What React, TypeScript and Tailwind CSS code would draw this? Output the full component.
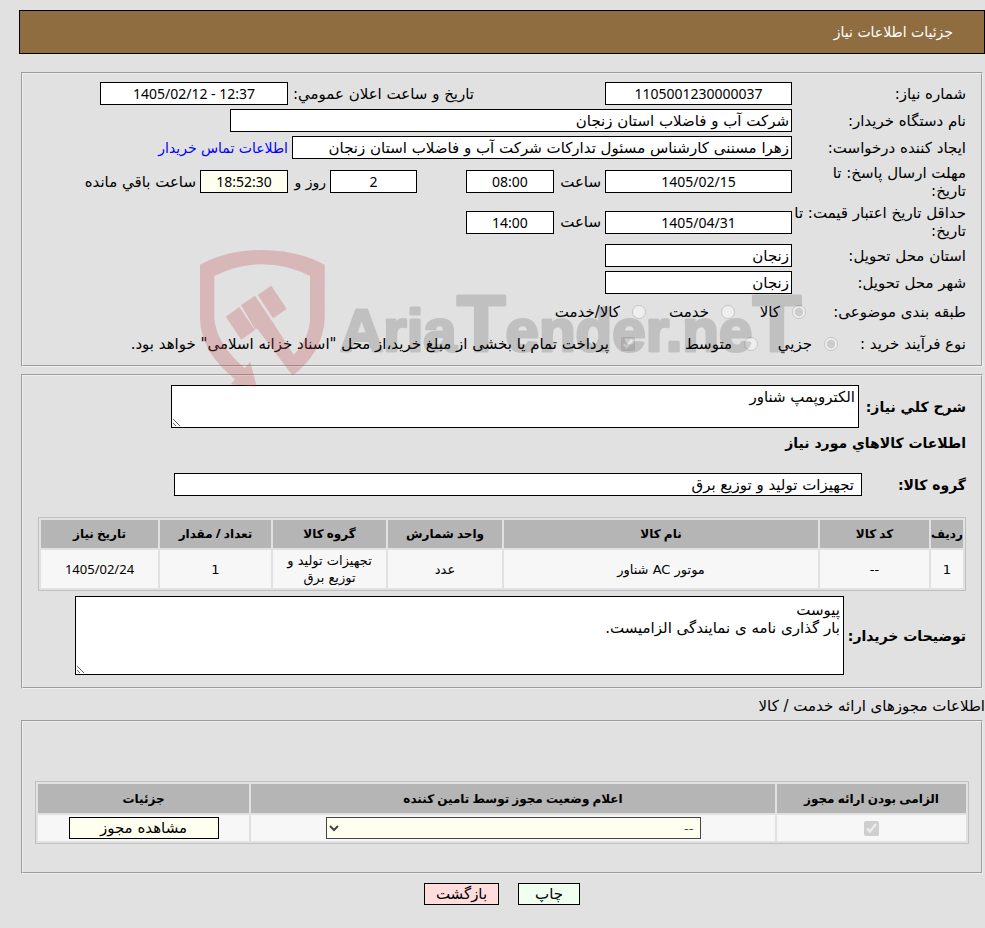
import React from 'react';
import clsx from 'clsx';

const fieldset = 'ml-[21px] mr-[2px] min-w-0 [border:2px_groove_#f0f0f0]';
const box = 'h-[23px] shrink-0 border border-black px-[2px] outline-none';
const num = "text-center text-[14px] font-['Noto_Sans','DejaVu_Sans',sans-serif]";
const th = "bg-[#b5b5b5] p-0 text-[12px] font-bold font-['Noto_Sans','DejaVu_Sans',sans-serif]";
const td = 'bg-[#f7f7f7] p-0 text-center';
const table = 'w-full table-fixed border-separate border-spacing-[2px] border border-[#c0c0c0]';

const goods = [
  { row: '1', code: '--', name: 'موتور AC شناور', unit: 'عدد', group: 'تجهیزات تولید و توزیع برق', count: '1', date: '1405/02/24' },
];

export default function App() {
  return (
    <div
      dir="rtl"
      className="min-h-screen bg-[#e1e1e1] pt-[10px] pb-[23px] font-['DejaVu_Sans',sans-serif] text-[15px] leading-[18px] text-black"
    >
      <header className="ml-[19px] flex h-[44px] items-center border border-black bg-[#8f6d40] px-[31px] text-[14px] text-white">
        <h1>جزئیات اطلاعات نیاز</h1>
      </header>

      {/* Need details */}
      <div className="relative mt-[18px]">
        <fieldset className={clsx(fieldset, 'pt-[6px] pr-[15px] pb-[5px]')}>
          <Row label="شماره نیاز:" id="need-no">
            <Box id="need-no" value="1105001230000037" className={clsx(num, 'w-[187px]')} />
            <label htmlFor="announced" className="mr-[127px] w-[182px] shrink-0 whitespace-nowrap">تاریخ و ساعت اعلان عمومي:</label>
            <Box id="announced" dir="ltr" value="1405/02/12 - 12:37" className={clsx(num, 'w-[188px]')} />
          </Row>
          <Row label="نام دستگاه خریدار:" id="buyer">
            <Box id="buyer" value="شرکت آب و فاضلاب استان زنجان" className="w-[562px]" />
          </Row>
          <Row label="ایجاد کننده درخواست:" id="creator">
            <Box id="creator" value="زهرا مسننی کارشناس مسئول تدارکات شرکت آب و فاضلاب استان زنجان" className="w-[500px]" />
            <a href="#contact" className="whitespace-nowrap text-[14px] text-[#0000ff]">اطلاعات تماس خریدار</a>
          </Row>
          <Row label={'مهلت ارسال پاسخ: تا\nتاریخ:'} id="deadline" className="h-[41px]">
            <Box id="deadline" value="1405/02/15" className={clsx(num, 'w-[187px]')} />
            <label htmlFor="deadline-hour" className="w-[43px] shrink-0 whitespace-nowrap">ساعت</label>
            <Box id="deadline-hour" value="08:00" className={clsx(num, 'w-[88px]')} />
            <Box id="days" value="2" className={clsx(num, 'mr-[45px] w-[87px]')} />
            <label htmlFor="days" className="w-[34px] shrink-0 whitespace-nowrap text-[14px]">روز و</label>
            <Box id="remaining" value="18:52:30" color="bg-[#fffff0]" className={clsx(num, 'w-[88px]')} />
            <label htmlFor="remaining" className="whitespace-nowrap">ساعت باقي مانده</label>
          </Row>
          <Row label={'حداقل تاریخ اعتبار قیمت: تا\nتاریخ:'} id="validity" className="h-[40px]">
            <Box id="validity" value="1405/04/31" className={clsx(num, 'w-[187px]')} />
            <label htmlFor="validity-hour" className="w-[43px] shrink-0 whitespace-nowrap">ساعت</label>
            <Box id="validity-hour" value="14:00" className={clsx(num, 'w-[88px]')} />
          </Row>
          <Row label="استان محل تحویل:" id="province">
            <Box id="province" value="زنجان" className="w-[187px]" />
          </Row>
          <Row label="شهر محل تحویل:" id="city">
            <Box id="city" value="زنجان" className="w-[187px]" />
          </Row>

          <div className="flex h-[32px] items-center">
            <span className="w-[160px] shrink-0 whitespace-nowrap">طبقه بندی موضوعی:</span>
            <Option type="radio" name="subject" label="کالا" checked className="w-[71px]" />
            <Option type="radio" name="subject" label="خدمت" className="w-[89px]" />
            <Option type="radio" name="subject" label="کالا/خدمت" />
          </div>
          <div className="flex h-[32px] items-center">
            <span className="w-[128px] shrink-0 whitespace-nowrap">نوع فرآیند خرید :</span>
            <Option type="radio" name="process" label="جزیي" checked className="w-[80px]" />
            <Option type="radio" name="process" label="متوسط" className="w-[123px]" />
            <Option
              type="checkbox"
              name="treasury"
              label={'پرداخت تمام یا بخشی از مبلغ خرید،از محل "اسناد خزانه اسلامی" خواهد بود.'}
              checked
            />
          </div>
        </fieldset>
        <Watermark />
      </div>

      {/* Goods */}
      <fieldset className={clsx(fieldset, 'mt-[7px] pt-[9px] pr-[15px] pb-[12px] pl-[15px]')}>
        <div className="flex items-center">
          <label htmlFor="summary" className="w-[107px] shrink-0 whitespace-nowrap text-[14px] font-bold">شرح کلي نیاز:</label>
          <textarea id="summary" readOnly defaultValue="الکتروپمپ شناور" className="ml-[133px] block h-[43px] min-w-0 flex-1 border border-black bg-white px-[3px] py-[2px] outline-none" />
        </div>
        <h2 className="mt-[6px] text-[14px] leading-[18px] font-bold">اطلاعات کالاهاي مورد نیاز</h2>
        <div className="mt-[21px] flex items-center">
          <label htmlFor="group" className="w-[104px] shrink-0 text-[14px] font-bold">گروه کالا:</label>
          <input id="group" readOnly value="تجهیزات تولید و توزیع برق" className="ml-[136px] h-[23px] min-w-0 flex-1 border border-black bg-white px-[7px] outline-none" />
        </div>
        <table className={clsx(table, 'mt-[21px]')}>
          <colgroup>
            <col className="w-[32px]" />
            <col className="w-[109px]" />
            <col />
            <col className="w-[114px]" />
            <col className="w-[113px]" />
            <col className="w-[111px]" />
            <col className="w-[117px]" />
          </colgroup>
          <thead>
            <tr className="h-[28px]">
              <th className={th}>ردیف</th>
              <th className={th}>کد کالا</th>
              <th className={th}>نام کالا</th>
              <th className={th}>واحد شمارش</th>
              <th className={th}>گروه کالا</th>
              <th className={th}>تعداد / مقدار</th>
              <th className={th}>تاریخ نیاز</th>
            </tr>
          </thead>
          <tbody className="text-[13px] leading-[17px]">
            {goods.map((g) => (
              <tr key={g.row} className="h-[38px]">
                <td className={td}>{g.row}</td>
                <td className={td}>{g.code}</td>
                <td className={td}>{g.name}</td>
                <td className={td}>{g.unit}</td>
                <td className={td}>{g.group}</td>
                <td className={td}>{g.count}</td>
                <td className={clsx(td, "font-['Noto_Sans',sans-serif]")}>{g.date}</td>
              </tr>
            ))}
          </tbody>
        </table>
        <div className="mt-[5px] flex items-center">
          <label htmlFor="notes" className="w-[122px] shrink-0 whitespace-nowrap text-[14px] font-bold">توضیحات خریدار:</label>
          <textarea id="notes" readOnly defaultValue={'پیوست\nبار گذاری نامه ی نمایندگی الزامیست.'} className="ml-[37px] block h-[79px] min-w-0 flex-1 border border-black bg-white px-[3px] py-[4px] outline-none" />
        </div>
      </fieldset>

      <h2 className="mt-[8px]">اطلاعات مجوزهای ارائه خدمت / کالا</h2>

      {/* Licences */}
      <fieldset className={clsx(fieldset, 'mt-[5px] px-[12px] pt-[59px] pb-[28px]')}>
        <table className={table}>
          <colgroup>
            <col className="w-[189px]" />
            <col />
            <col className="w-[211px]" />
          </colgroup>
          <thead>
            <tr className="h-[29px]">
              <th className={th}>الزامی بودن ارائه مجوز</th>
              <th className={th}>اعلام وضعیت مجوز توسط تامین کننده</th>
              <th className={th}>جزئیات</th>
            </tr>
          </thead>
          <tbody>
            <tr className="h-[26px]">
              <td className={td}>
                <input type="checkbox" aria-label="الزامی بودن ارائه مجوز" checked disabled readOnly className="mx-auto block size-[15px]" />
              </td>
              <td className={td}>
                <select aria-label="اعلام وضعیت مجوز" disabled className="mx-auto block h-[22px] w-[375px] border border-[#444] bg-[#fffff0] px-[2px] text-[13px] leading-[18px] text-[#444] opacity-100">
                  <option>--</option>
                </select>
              </td>
              <td className={td}>
                <button className="mx-auto block h-[22px] w-[150px] border border-black bg-[#fffff0]">مشاهده مجوز</button>
              </td>
            </tr>
          </tbody>
        </table>
      </fieldset>

      <div className="mt-[9px] mr-[405px] flex gap-[19px]">
        <button className="h-[22px] w-[62px] border border-black bg-[#f0fff0]">چاپ</button>
        <button className="h-[22px] w-[75px] border border-black bg-[#ffdddd]">بازگشت</button>
      </div>
    </div>
  );
}

function Row({ label, id, className = 'h-[27px]', children }: any) {
  return (
    <div className={clsx('flex items-center gap-1', className)}>
      <label htmlFor={id} className="w-[170px] shrink-0 whitespace-pre">{label}</label>
      {children}
    </div>
  );
}

function Box({ id, value, dir, color = 'bg-white', className }: any) {
  return <input id={id} dir={dir} readOnly value={value} className={clsx(box, color, className)} />;
}

function Option({ type, name, label, checked, className }: any) {
  return (
    <label className={clsx('flex shrink-0 items-center gap-3 whitespace-nowrap', className)}>
      <input type={type} name={name} checked={!!checked} disabled readOnly className="size-[14px] shrink-0" />
      {label}
    </label>
  );
}

function Watermark() {
  return (
    <div className="pointer-events-none absolute top-[177px] right-[2px] left-[21px] flex justify-center" aria-hidden="true">
      <svg className="[direction:ltr]" width="606" height="140" viewBox="0 0 606 140">
        <g fill="#c04048" fillOpacity="0.26">
          <path d="M1 15.7Q28 1 63.3 1Q98 1 125.7 15.7V70Q124 103 93.7 126.7L58.3 79.7L56 80L42 56L56 46.7L72 70.5L94.7 105.7Q110 90 111 70V27Q88 15.3 63.3 15.3Q38 15.3 15.3 27V70Q18 96 45.7 119L51.3 112.7L57.7 137.7L31.7 135.3L36 130.3Q2 103 1 70Z" />
          <path d="M26.7 67.7L40.3 58L56 81L42.3 90.7ZM58.7 46L72.3 36.7L87.7 60L74 69.3Z" />
        </g>
        <text
          x="141"
          y="102"
          opacity="0.14"
          fill="#000"
          stroke="#000"
          strokeWidth="3"
          strokeLinejoin="round"
          fontFamily="'Liberation Sans',sans-serif"
          fontWeight="700"
          fontSize="60"
        >
          Aria<tspan fontSize="80">T</tspan>ender.ne<tspan fontSize="80">T</tspan>
        </text>
      </svg>
    </div>
  );
}
